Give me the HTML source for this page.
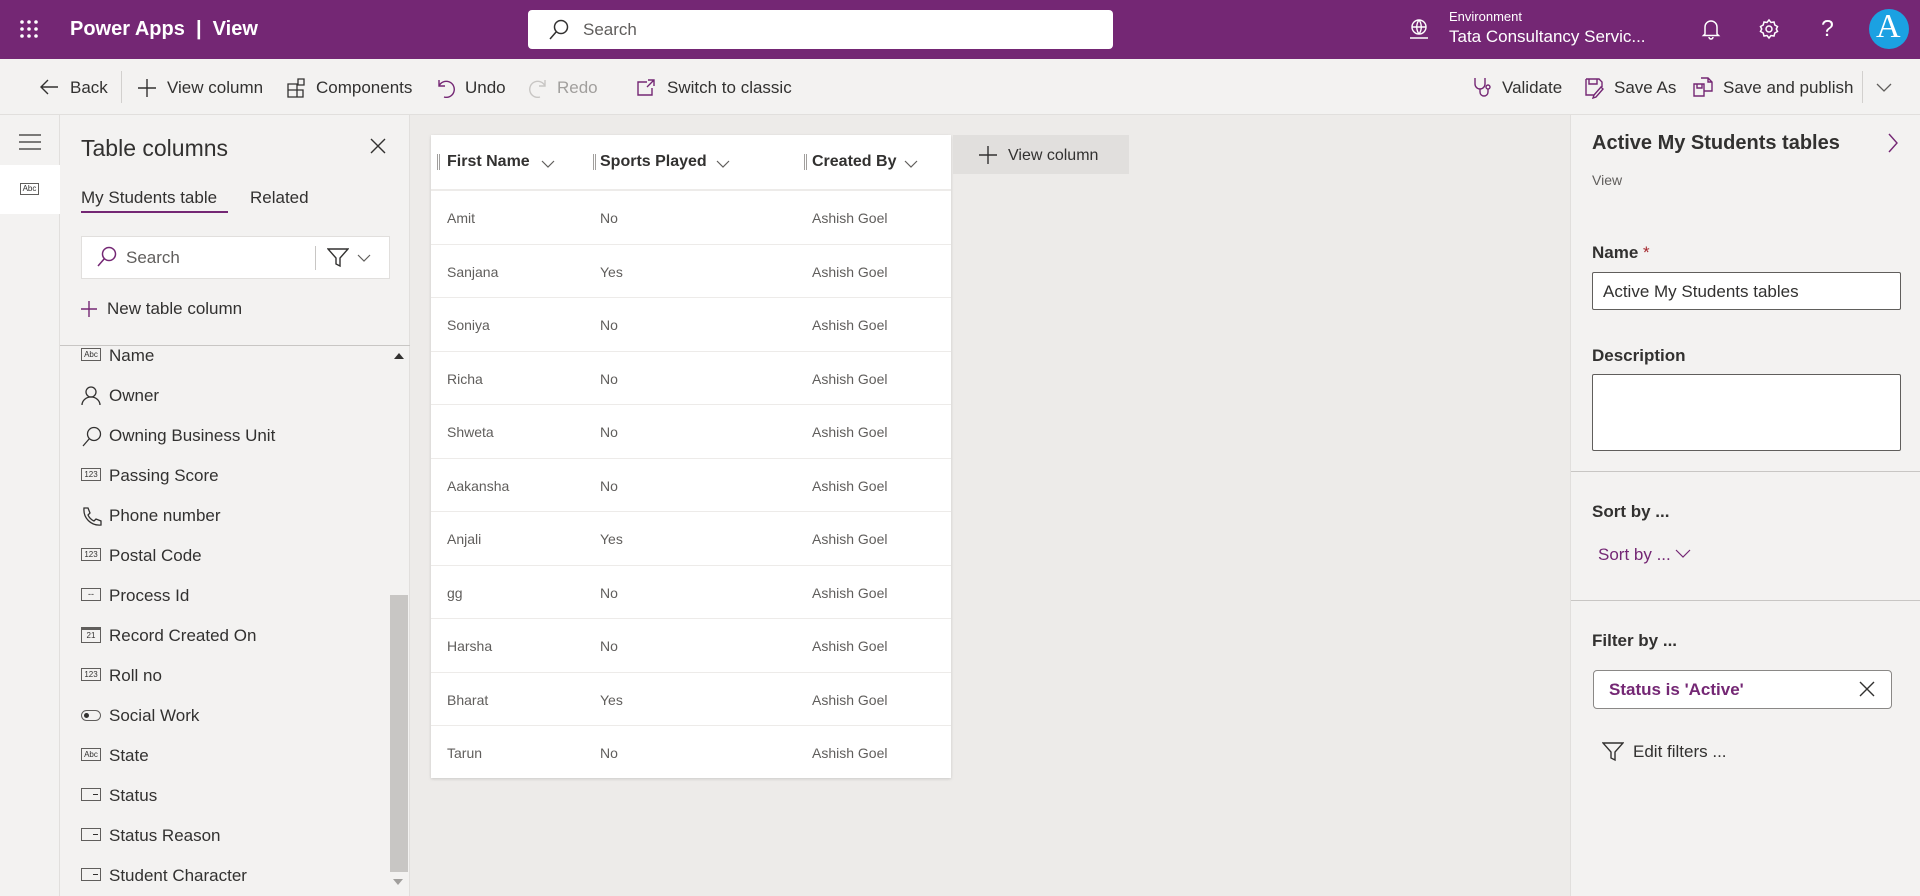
<!DOCTYPE html>
<html><head><meta charset="utf-8"><style>
*{box-sizing:border-box;margin:0;padding:0}
body{width:1920px;height:896px;overflow:hidden;font-family:"Liberation Sans",sans-serif;background:#edebe9;position:relative;color:#323130}
.abs{position:absolute}
.hdr{left:0;top:0;width:1920px;height:59px;background:#742774}
.tb{left:0;top:59px;width:1920px;height:56px;background:#f3f2f1;border-bottom:1px solid #e1dfdd}
.t{position:absolute;white-space:nowrap}
svg{position:absolute}
.rail{left:0;top:115px;width:60px;height:781px;background:#f3f2f1;border-right:1px solid #e1dfdd}
.lp{left:60px;top:115px;width:350px;height:781px;background:#f3f2f1;border-right:1px solid #e1dfdd}
.rp{left:1570px;top:115px;width:350px;height:781px;background:#f3f2f1;border-left:1px solid #e1dfdd}
.card{left:431px;top:135px;width:520px;height:643px;background:#fff;box-shadow:0 1px 3px rgba(0,0,0,.15)}
.row{position:absolute;left:0;width:520px;height:53.5px;border-top:1px solid #edebe9;font-size:14px;color:#605e5c}
.row span{position:absolute;top:19px}
.li{position:absolute;left:0;font-size:17px;color:#323130}
</style></head><body>
<div class="abs hdr">
 <svg style="left:20px;top:20px" width="18" height="18" fill="#fff"><circle cx="2" cy="2" r="1.8"/><circle cx="9" cy="2" r="1.8"/><circle cx="16" cy="2" r="1.8"/><circle cx="2" cy="9" r="1.8"/><circle cx="9" cy="9" r="1.8"/><circle cx="16" cy="9" r="1.8"/><circle cx="2" cy="16" r="1.8"/><circle cx="9" cy="16" r="1.8"/><circle cx="16" cy="16" r="1.8"/></svg>
 <div class="t" style="left:70px;top:18px;color:#fff;font-size:20px;font-weight:bold">Power Apps &nbsp;|&nbsp; View</div>
 <div class="abs" style="left:528px;top:10px;width:585px;height:39px;background:#fff;border-radius:4px"></div>
 <svg style="left:548px;top:19px" width="22" height="22" fill="none" stroke="#323130" stroke-width="1.5"><circle cx="13" cy="8" r="6.5"/><path d="M8.5 12.5 2 20"/></svg>
 <div class="t" style="left:583px;top:20px;font-size:17px;color:#605e5c">Search</div>
 <svg style="left:1408px;top:18px" width="22" height="22" fill="none" stroke="#fff" stroke-width="1.4"><circle cx="11" cy="9" r="7"/><path d="M4 9h14M11 2c-3 4-3 10 0 14M11 2c3 4 3 10 0 14M2 20h18"/></svg>
 <div class="t" style="left:1449px;top:9px;font-size:13px;color:#fff">Environment</div>
 <div class="t" style="left:1449px;top:27px;font-size:17px;color:#fff">Tata Consultancy Servic...</div>
 <svg style="left:1700px;top:18px" width="22" height="22" fill="none" stroke="#fff" stroke-width="1.5"><path d="M5 16V9a6 6 0 0 1 12 0v7l1.5 1.5h-15zM9 19a2 2 0 0 0 4 0"/></svg>
 <svg style="left:1758px;top:18px" width="22" height="22" fill="none" stroke="#fff" stroke-width="1.5"><circle cx="11" cy="11" r="3"/><path d="M11 2l2 2.5 3-.5.8 3 2.7 1.5-1.2 2.5 1.2 2.5-2.7 1.5-.8 3-3-.5-2 2.5-2-2.5-3 .5-.8-3L2.5 13.5 3.7 11 2.5 8.5 5.2 7l.8-3 3 .5z"/></svg>
 <div class="t" style="left:1821px;top:15px;font-size:23px;color:#fff">?</div>
 <div class="abs" style="left:1869px;top:9px;width:40px;height:40px;border-radius:50%;background:#1ba1e2"></div>
 <div class="t" style="left:1876px;top:8px;font-size:34px;color:#fff;font-family:'Liberation Serif',serif">A</div>
</div>
<div class="abs tb">
 <svg style="left:39px;top:19px" width="20" height="18" fill="none" stroke="#323130" stroke-width="1.4"><path d="M19 9H2M9 2 2 9l7 7"/></svg>
 <div class="t" style="left:70px;top:19px;font-size:17px">Back</div>
 <div class="abs" style="left:121px;top:12px;width:1px;height:32px;background:#d2d0ce"></div>
 <svg style="left:137px;top:19px" width="20" height="20" stroke="#323130" stroke-width="1.4"><path d="M10 1v18M1 10h18"/></svg>
 <div class="t" style="left:167px;top:19px;font-size:17px">View column</div>
 <svg style="left:287px;top:19px" width="20" height="20" fill="none" stroke="#323130" stroke-width="1.3"><path d="M1 6h9v13H1zM1 12h9M10 12h6v7h-6M11 1h6v6h-6z"/></svg>
 <div class="t" style="left:316px;top:19px;font-size:17px">Components</div>
 <svg style="left:437px;top:19px" width="18" height="20" fill="none" stroke="#742774" stroke-width="1.4"><path d="M2 2v6h6M2 8a8 8 0 1 1 5 11"/></svg>
 <div class="t" style="left:465px;top:19px;font-size:17px">Undo</div>
 <svg style="left:529px;top:19px" width="18" height="20" fill="none" stroke="#c8c6c4" stroke-width="1.4"><path d="M16 2v6h-6M16 8a8 8 0 1 0-5 11"/></svg>
 <div class="t" style="left:557px;top:19px;font-size:17px;color:#a19f9d">Redo</div>
 <svg style="left:637px;top:20px" width="20" height="18" fill="none" stroke="#742774" stroke-width="1.4"><path d="M10 3H1v13h14V9M11 1h6v6M17 1l-7 7"/></svg>
 <div class="t" style="left:667px;top:19px;font-size:17px">Switch to classic</div>
 <svg style="left:1472px;top:17px" width="22" height="22" fill="none" stroke="#742774" stroke-width="1.4"><path d="M3 2v6a5 5 0 0 0 10 0V2M8 13v3a4 4 0 0 0 8 0v-3"/><circle cx="16" cy="11" r="2"/></svg>
 <div class="t" style="left:1502px;top:19px;font-size:17px">Validate</div>
 <svg style="left:1584px;top:18px" width="22" height="22" fill="none" stroke="#742774" stroke-width="1.4"><path d="M2 2h13l3 3v5M2 2v16h8M5 2v5h8V2M17 10l-7 8-1 3 3-1 7-8z"/></svg>
 <div class="t" style="left:1614px;top:19px;font-size:17px">Save As</div>
 <svg style="left:1692px;top:17px" width="22" height="22" fill="none" stroke="#742774" stroke-width="1.4"><path d="M2 8h10v12H2zM5 8v4h5V8M9 2h7l4 4v9h-8M16 2v4h4"/></svg>
 <div class="t" style="left:1723px;top:19px;font-size:17px">Save and publish</div>
 <div class="abs" style="left:1862px;top:12px;width:1px;height:32px;background:#d2d0ce"></div>
 <svg style="left:1876px;top:24px" width="16" height="10" fill="none" stroke="#605e5c" stroke-width="1.3"><path d="M1 1l7 7 7-7"/></svg>
</div>
<div class="abs rail">
 <svg style="left:19px;top:19px" width="22" height="16" stroke="#323130" stroke-width="1.3"><path d="M0 1h22M0 8h22M0 15h22"/></svg>
 <div class="abs" style="left:0;top:50px;width:60px;height:49px;background:#fff"></div>
 <div class="abs" style="left:20px;top:68px;width:19px;height:12px;border:1px solid #605e5c;font-size:8px;line-height:10px;text-align:center">Abc</div>
</div>
<div class="abs lp">
 <div class="t" style="left:21px;top:20px;font-size:23px">Table columns</div>
 <svg style="left:310px;top:23px" width="16" height="16" stroke="#323130" stroke-width="1.4"><path d="M1 1l14 14M15 1 1 15"/></svg>
 <div class="t" style="left:21px;top:73px;font-size:17px;color:#323130">My Students table</div>
 <div class="abs" style="left:21px;top:96px;width:147px;height:2px;background:#742774"></div>
 <div class="t" style="left:190px;top:73px;font-size:17px;color:#323130">Related</div>
 <div class="abs" style="left:21px;top:121px;width:309px;height:43px;background:#fff;border:1px solid #e1dfdd"></div>
 <svg style="left:36px;top:131px" width="22" height="22" fill="none" stroke="#742774" stroke-width="1.5"><circle cx="13" cy="8" r="6.5"/><path d="M8.5 12.5 2 20"/></svg>
 <div class="t" style="left:66px;top:133px;font-size:17px;color:#605e5c">Search</div>
 <div class="abs" style="left:255px;top:131px;width:1px;height:24px;background:#c8c6c4"></div>
 <svg style="left:267px;top:133px" width="22" height="20" fill="none" stroke="#323130" stroke-width="1.4"><path d="M1 1h20l-8 9v8l-4-2v-6z"/></svg>
 <svg style="left:297px;top:139px" width="14" height="8" fill="none" stroke="#605e5c" stroke-width="1.2"><path d="M1 1l6 6 6-6"/></svg>
 <svg style="left:21px;top:186px" width="16" height="16" stroke="#742774" stroke-width="1.4"><path d="M8 0v16M0 8h16"/></svg>
 <div class="t" style="left:47px;top:184px;font-size:17px">New table column</div>
 <div class="abs" style="left:0;top:230px;width:350px;height:1px;background:#c8c6c4"></div>
 <svg style="left:334px;top:238px" width="10" height="6" fill="#323130"><path d="M0 6l5-6 5 6z"/></svg>
 <div class="abs" style="left:330px;top:480px;width:18px;height:277px;background:#c8c6c4"></div>
 <svg style="left:333px;top:764px" width="10" height="6" fill="#a19f9d"><path d="M0 0l5 6 5-6z"/></svg>
 <div class="abs" style="left:21px;top:216px;width:310px;height:565px">
  <div class="li" style="top:15px"><span style="position:absolute;left:0;top:2px;width:20px;height:13px;border:1px solid #605e5c;font-size:8px;line-height:11px;text-align:center">Abc</span><span style="margin-left:28px">Name</span></div>
  <div class="li" style="top:55px"><svg style="left:0;top:0" width="20" height="20" fill="none" stroke="#323130" stroke-width="1.3"><circle cx="10" cy="6" r="5"/><path d="M1 19a9 8 0 0 1 18 0"/></svg><span style="margin-left:28px">Owner</span></div>
  <div class="li" style="top:95px"><svg style="left:0;top:0" width="22" height="22" fill="none" stroke="#323130" stroke-width="1.3"><circle cx="13" cy="8" r="6.5"/><path d="M8.5 12.5 2 20"/></svg><span style="margin-left:28px">Owning Business Unit</span></div>
  <div class="li" style="top:135px"><span style="position:absolute;left:0;top:2px;width:20px;height:13px;border:1px solid #605e5c;font-size:8px;line-height:11px;text-align:center">123</span><span style="margin-left:28px">Passing Score</span></div>
  <div class="li" style="top:175px"><svg style="left:0;top:0" width="22" height="22" fill="none" stroke="#323130" stroke-width="1.3"><path d="M3 2l4 0 2 5-2 2a12 12 0 0 0 6 6l2-2 5 2v4c-10 1-18-7-17-17z"/></svg><span style="margin-left:28px">Phone number</span></div>
  <div class="li" style="top:215px"><span style="position:absolute;left:0;top:2px;width:20px;height:13px;border:1px solid #605e5c;font-size:8px;line-height:11px;text-align:center">123</span><span style="margin-left:28px">Postal Code</span></div>
  <div class="li" style="top:255px"><span style="position:absolute;left:0;top:2px;width:20px;height:13px;border:1px solid #605e5c;font-size:9px;line-height:10px;text-align:center">--</span><span style="margin-left:28px">Process Id</span></div>
  <div class="li" style="top:295px"><span style="position:absolute;left:0;top:1px;width:20px;height:16px;border:1px solid #605e5c;border-top-width:3px;font-size:8px;line-height:11px;text-align:center">21</span><span style="margin-left:28px">Record Created On</span></div>
  <div class="li" style="top:335px"><span style="position:absolute;left:0;top:2px;width:20px;height:13px;border:1px solid #605e5c;font-size:8px;line-height:11px;text-align:center">123</span><span style="margin-left:28px">Roll no</span></div>
  <div class="li" style="top:375px"><span style="position:absolute;left:0;top:4px;width:20px;height:11px;border:1px solid #605e5c;border-radius:6px"></span><span style="position:absolute;left:3px;top:7px;width:5px;height:5px;background:#323130;border-radius:50%"></span><span style="margin-left:28px">Social Work</span></div>
  <div class="li" style="top:415px"><span style="position:absolute;left:0;top:2px;width:20px;height:13px;border:1px solid #605e5c;font-size:8px;line-height:11px;text-align:center">Abc</span><span style="margin-left:28px">State</span></div>
  <div class="li" style="top:455px"><span style="position:absolute;left:0;top:2px;width:20px;height:13px;border:1px solid #605e5c"></span><span style="position:absolute;left:12px;top:8px;width:5px;height:1px;background:#323130"></span><span style="margin-left:28px">Status</span></div>
  <div class="li" style="top:495px"><span style="position:absolute;left:0;top:2px;width:20px;height:13px;border:1px solid #605e5c"></span><span style="position:absolute;left:12px;top:8px;width:5px;height:1px;background:#323130"></span><span style="margin-left:28px">Status Reason</span></div>
  <div class="li" style="top:535px"><span style="position:absolute;left:0;top:2px;width:20px;height:13px;border:1px solid #605e5c"></span><span style="position:absolute;left:12px;top:8px;width:5px;height:1px;background:#323130"></span><span style="margin-left:28px">Student Character</span></div>
 </div>
</div>
<div class="abs card">
 <div class="abs" style="left:0;top:0;width:520px;height:55px;border-bottom:1px solid #edebe9"></div>
 <div class="abs" style="left:6px;top:19px;width:3px;height:16px;border-left:1px solid #a19f9d;border-right:1px solid #a19f9d"></div>
 <div class="t" style="left:16px;top:18px;font-size:16px;font-weight:bold;color:#323130">First Name</div>
 <svg style="left:110px;top:25px" width="14" height="8" fill="none" stroke="#605e5c" stroke-width="1.2"><path d="M1 1l6 6 6-6"/></svg>
 <div class="abs" style="left:162px;top:19px;width:3px;height:16px;border-left:1px solid #a19f9d;border-right:1px solid #a19f9d"></div>
 <div class="t" style="left:169px;top:18px;font-size:16px;font-weight:bold;color:#323130">Sports Played</div>
 <svg style="left:285px;top:25px" width="14" height="8" fill="none" stroke="#605e5c" stroke-width="1.2"><path d="M1 1l6 6 6-6"/></svg>
 <div class="abs" style="left:373px;top:19px;width:3px;height:16px;border-left:1px solid #a19f9d;border-right:1px solid #a19f9d"></div>
 <div class="t" style="left:381px;top:18px;font-size:16px;font-weight:bold;color:#323130">Created By</div>
 <svg style="left:473px;top:25px" width="14" height="8" fill="none" stroke="#605e5c" stroke-width="1.2"><path d="M1 1l6 6 6-6"/></svg>
 <div class="row" style="top:55px"><span style="left:16px">Amit</span><span style="left:169px">No</span><span style="left:381px">Ashish Goel</span></div>
 <div class="row" style="top:108.5px"><span style="left:16px">Sanjana</span><span style="left:169px">Yes</span><span style="left:381px">Ashish Goel</span></div>
 <div class="row" style="top:162px"><span style="left:16px">Soniya</span><span style="left:169px">No</span><span style="left:381px">Ashish Goel</span></div>
 <div class="row" style="top:215.5px"><span style="left:16px">Richa</span><span style="left:169px">No</span><span style="left:381px">Ashish Goel</span></div>
 <div class="row" style="top:269px"><span style="left:16px">Shweta</span><span style="left:169px">No</span><span style="left:381px">Ashish Goel</span></div>
 <div class="row" style="top:322.5px"><span style="left:16px">Aakansha</span><span style="left:169px">No</span><span style="left:381px">Ashish Goel</span></div>
 <div class="row" style="top:376px"><span style="left:16px">Anjali</span><span style="left:169px">Yes</span><span style="left:381px">Ashish Goel</span></div>
 <div class="row" style="top:429.5px"><span style="left:16px">gg</span><span style="left:169px">No</span><span style="left:381px">Ashish Goel</span></div>
 <div class="row" style="top:483px"><span style="left:16px">Harsha</span><span style="left:169px">No</span><span style="left:381px">Ashish Goel</span></div>
 <div class="row" style="top:536.5px"><span style="left:16px">Bharat</span><span style="left:169px">Yes</span><span style="left:381px">Ashish Goel</span></div>
 <div class="row" style="top:590px"><span style="left:16px">Tarun</span><span style="left:169px">No</span><span style="left:381px">Ashish Goel</span></div>
</div>
<div class="abs" style="left:953px;top:135px;width:176px;height:39px;background:#e1dfdd"></div>
<svg style="left:979px;top:146px" width="18" height="18" stroke="#323130" stroke-width="1.4"><path d="M9 0v18M0 9h18"/></svg>
<div class="t" style="left:1008px;top:147px;font-size:16px">View column</div>
<div class="abs rp">
 <div class="t" style="left:21px;top:17px;font-size:20px;font-weight:bold;color:#323130">Active My Students tables</div>
 <svg style="left:317px;top:18px" width="10" height="20" fill="none" stroke="#742774" stroke-width="1.4"><path d="M1 1l8 9-8 9"/></svg>
 <div class="t" style="left:21px;top:57px;font-size:14px;color:#605e5c">View</div>
 <div class="t" style="left:21px;top:128px;font-size:17px;font-weight:bold">Name <span style="color:#a4262c;font-weight:normal">*</span></div>
 <div class="abs" style="left:21px;top:157px;width:309px;height:38px;background:#fff;border:1px solid #605e5c;border-radius:2px"></div>
 <div class="t" style="left:32px;top:167px;font-size:17px">Active My Students tables</div>
 <div class="t" style="left:21px;top:231px;font-size:17px;font-weight:bold">Description</div>
 <div class="abs" style="left:21px;top:259px;width:309px;height:77px;background:#fff;border:1px solid #605e5c;border-radius:2px"></div>
 <div class="abs" style="left:0;top:356px;width:350px;height:1px;background:#c8c6c4"></div>
 <div class="t" style="left:21px;top:387px;font-size:17px;font-weight:bold">Sort by ...</div>
 <div class="t" style="left:27px;top:430px;font-size:17px;color:#742774">Sort by ...</div>
 <svg style="left:104px;top:434px" width="16" height="9" fill="none" stroke="#742774" stroke-width="1.2"><path d="M1 1l7 7 7-7"/></svg>
 <div class="abs" style="left:0;top:485px;width:350px;height:1px;background:#c8c6c4"></div>
 <div class="t" style="left:21px;top:516px;font-size:17px;font-weight:bold">Filter by ...</div>
 <div class="abs" style="left:22px;top:555px;width:299px;height:39px;background:#fff;border:1px solid #8a8886;border-radius:4px"></div>
 <div class="t" style="left:38px;top:565px;font-size:17px;font-weight:bold;color:#742774">Status is 'Active'</div>
 <svg style="left:288px;top:566px" width="16" height="16" stroke="#323130" stroke-width="1.4"><path d="M1 1l14 14M15 1 1 15"/></svg>
 <svg style="left:31px;top:627px" width="22" height="20" fill="none" stroke="#323130" stroke-width="1.4"><path d="M1 1h20l-8 9v8l-4-2v-6z"/></svg>
 <div class="t" style="left:62px;top:627px;font-size:17px">Edit filters ...</div>
</div>
</body></html>
